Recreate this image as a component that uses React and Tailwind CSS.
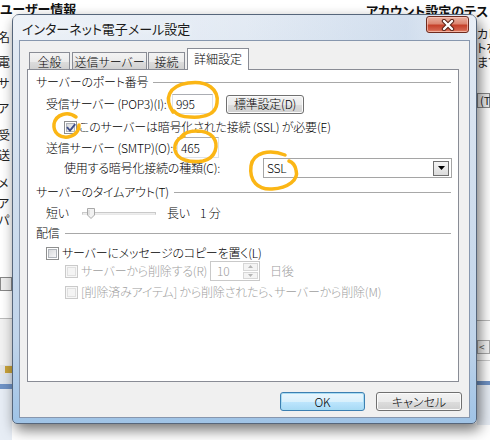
import React from "react";

const JP = "font-['Noto_Sans_CJK_JP','Noto_Sans',sans-serif] [font-feature-settings:'palt']";

function Checkbox({ checked, disabled }) {
  return (
    <span
      className={`relative flex w-[13px] h-[13px] shrink-0 p-[1px] border ${
        disabled ? "border-[#cacaca] bg-[#f7f7f7]" : "border-[#8e8f8f] bg-white"
      }`}
    >
      <span
        className={`flex-1 border ${
          disabled
            ? "border-[#e0e0e0] bg-[#f4f4f4]"
            : "border-[#b0b4ba] bg-[linear-gradient(135deg,#d9dadc,#f7f7f8)]"
        }`}
      />
      {checked && (
        <svg className="absolute left-[1px] top-[1px]" width="10" height="10" viewBox="0 0 10 10">
          <path d="M1.6 4.8 L4 7.6 L8.6 1.8" stroke="#3f4f8a" strokeWidth="1.9" fill="none" strokeLinecap="square" />
        </svg>
      )}
    </span>
  );
}

function Btn({ children, def, className = "" }) {
  return (
    <div
      className={`flex items-center justify-center rounded-[3px] border ${
        def
          ? "border-[#3c7fb1] shadow-[inset_0_0_0_1px_#a8dcf3] bg-[linear-gradient(to_bottom,#eaf6fd_0%,#d9f0fc_50%,#bee6fd_51%,#a7d9f5_100%)]"
          : "border-[#707070] shadow-[inset_0_0_0_1px_#fbfbfb] bg-[linear-gradient(to_bottom,#f2f2f2_0%,#ebebeb_50%,#dddddd_51%,#cfcfcf_100%)]"
      } text-[12px] leading-none text-black ${className}`}
    >
      {children}
    </div>
  );
}

function Input({ value, className = "" }) {
  return (
    <div
      className={`flex items-center border border-[#dde2e8] border-t-[#abadb3] bg-white pl-[3px] text-[12px] leading-none ${className}`}
    >
      {value}
    </div>
  );
}

function GroupHeader({ children, className = "" }) {
  return (
    <div className={`flex items-center h-[16px] pl-[8px] pr-[7px] ${className}`}>
      <span className="text-[12px] leading-none whitespace-nowrap">{children}</span>
      <span className="flex-1 ml-[5px] h-px bg-[#a8a8a8]" />
    </div>
  );
}

function Background() {
  const left = [
    ["名", 16],
    ["電", 11],
    ["サ", 7],
    ["ア", 11],
    ["受", 13],
    ["送", 6],
    ["メ", 14],
    ["ア", 6],
    ["パ", 3],
  ];
  return (
    <div className="absolute inset-0 bg-white">
      <div className="absolute left-0 top-0 w-[12px] h-full flex flex-col overflow-hidden">
        <div className="h-[14px] shrink-0" />
        {left.map(([c, m], i) => (
          <div key={i} className="h-[14px] shrink-0 text-[12px] leading-[14px] text-[#222] -ml-[2px]" style={{ marginTop: m }}>
            {c}
          </div>
        ))}
        <div className="mt-[50px] shrink-0 w-[12px] h-[14px] border border-[#888] bg-[#eee]" />
        <div className="mt-[27px] shrink-0 h-px bg-[#bbb]" />
        <div className="h-[46px] shrink-0 bg-[#f2f2f2]" />
        <div className="h-[9px] shrink-0 bg-[#e6e6e6] flex items-center pl-[5px]">
          <span className="w-[7px] h-[7px] bg-[#c9a33b]" />
        </div>
        <div className="h-[10px] shrink-0 bg-[#dfe6ef]" />
        <div className="h-[5px] shrink-0 bg-[#6f93c6]" />
        <div className="flex-1 bg-[#e7edf5]" />
      </div>
      <div className="absolute left-0 top-[1px] text-[13px] font-bold text-[#111] leading-[15px]">ユーザー情報</div>
      <div className="absolute left-[366px] top-[3px] text-[13px] font-bold text-[#111] leading-[15px]">アカウント設定のテスト</div>
      <div className="absolute left-[477px] top-[27px] w-[13px] h-full flex flex-col text-[12px] leading-[14px] text-[#222] overflow-hidden">
        <div className="h-[14px] whitespace-nowrap">カし</div>
        <div className="h-[14px] whitespace-nowrap">トを</div>
        <div className="h-[14px] whitespace-nowrap">ます</div>
        <div className="mt-[24px] h-[15px] border border-[#888] bg-[#eee] pl-[2px] text-[11px] leading-[13px] whitespace-nowrap">(T</div>
        <div className="mt-[212px] h-px bg-[#bbb]" />
        <div className="mt-[19px] h-[14px] border border-[#aaa] bg-[#f5f5f5] text-[10px] leading-[12px] pl-[1px] text-[#555]">&lt;</div>
        <div className="mt-[6px] h-px bg-[#ccc]" />
        <div className="mt-[20px] h-[4px] bg-[#6f93c6]" />
        <div className="h-[40px] bg-[#e7edf5]" />
      </div>
    </div>
  );
}

function CloseButton() {
  return (
    <div className="mt-[1px] mr-px w-[43px] h-[17px] rounded-[3px] border border-[#6e2b1f] bg-[linear-gradient(to_bottom,#eab2a2_0%,#dc8671_45%,#c5412a_55%,#d2604a_85%,#e48c6e_100%)] shadow-[inset_0_0_0_1px_rgba(255,210,200,0.6)] flex items-center justify-center">
      <svg width="14" height="12" viewBox="0 0 14 12">
        <path d="M3 2 L11 10 M11 2 L3 10" stroke="#5a2318" strokeWidth="4.4" strokeLinecap="round" />
        <path d="M3 2 L11 10 M11 2 L3 10" stroke="#ffffff" strokeWidth="2.4" strokeLinecap="round" />
      </svg>
    </div>
  );
}

function Tab({ children, w, selected }) {
  return (
    <div
      className={`flex items-center justify-center text-[12px] leading-none border border-[#898c95] ${
        selected
          ? "relative z-10 h-[22px] bg-white border-b-0 pb-[2px]"
          : "h-[18px] border-b-0 bg-[linear-gradient(to_bottom,#f3f3f3,#ebebeb_50%,#dddddd_51%,#cfcfcf)]"
      }`}
      style={{ width: w }}
    >
      {children}
    </div>
  );
}

function Spinner() {
  return (
    <div className="flex h-[20px] w-[50px] border border-[#c9c9c9] bg-white">
      <div className="flex-1 flex items-center pl-[6px] text-[12px] leading-none text-[#9c9c9c]">10</div>
      <div className="w-[15px] my-[1px] mr-[1px] flex flex-col gap-px">
        <div className="flex-1 border border-[#d7d7d7] bg-[#f4f4f4] flex items-center justify-center">
          <svg width="5" height="3" viewBox="0 0 5 3"><path d="M0 3 L2.5 0 L5 3Z" fill="#b5b5b5" /></svg>
        </div>
        <div className="flex-1 border border-[#d7d7d7] bg-[#f4f4f4] flex items-center justify-center">
          <svg width="5" height="3" viewBox="0 0 5 3"><path d="M0 0 L2.5 3 L5 0Z" fill="#b5b5b5" /></svg>
        </div>
      </div>
    </div>
  );
}

function Slider() {
  return (
    <div className="relative w-[74px] h-[14px] flex items-center">
      <div className="w-full h-[3px] border border-[#c9c9c9] border-b-[#e8e8e8] bg-[#eeeeee]" />
      <svg className="absolute left-[5px] top-[2px]" width="8" height="11" viewBox="0 0 8 11">
        <path d="M0.5 0.5 H7.5 V7 L4 10.5 L0.5 7 Z" fill="#f2f2f2" stroke="#a8a8a8" />
        <path d="M2 2 V7" stroke="#d0d0d0" />
      </svg>
    </div>
  );
}

function Panel() {
  return (
    <div className="-mt-px ml-[7px] w-[432px] h-[313px] border border-[#898c95] bg-white flex flex-col tracking-[-0.2px] font-light">
      <GroupHeader className="mt-[4px]">サーバーのポート番号</GroupHeader>

      <div className="mt-[4px] h-[20px] flex items-center pl-[18px]">
        <span className="w-[126px] text-[12px] leading-none whitespace-nowrap">受信サーバー (POP3)(I):</span>
        <Input value="995" className="w-[41px] h-[20px]" />
        <Btn className="ml-[13px] w-[78px] h-[19px]">標準設定(D)</Btn>
      </div>

      <div className="mt-[6px] h-[14px] flex items-center pl-[36px]">
        <Checkbox checked />
        <span className="ml-[2px] text-[12px] leading-none whitespace-nowrap">このサーバーは暗号化された接続 (SSL) が必要(E)</span>
      </div>

      <div className="mt-[3px] h-[21px] flex items-center pl-[18px]">
        <span className="w-[131px] text-[12px] leading-none whitespace-nowrap">送信サーバー (SMTP)(O):</span>
        <Input value="465" className="w-[42px] h-[21px]" />
      </div>

      <div className="h-[20px] flex items-center pl-[36px]">
        <span className="w-[199px] text-[12px] leading-none whitespace-nowrap">使用する暗号化接続の種類(C):</span>
        <div className="w-[189px] h-[20px] border border-[#a5a5a5] bg-white flex items-center pl-[3px] pr-[2px]">
          <span className="flex-1 text-[12px] leading-none">SSL</span>
          <div className="w-[16px] h-[15px] border border-[#6f6f6f] bg-[linear-gradient(to_bottom,#f4f4f4,#dcdcdc)] flex items-center justify-center">
            <svg width="7" height="4" viewBox="0 0 7 4"><path d="M0 0 H7 L3.5 4Z" fill="#000" /></svg>
          </div>
        </div>
      </div>

      <GroupHeader className="mt-[6px]">サーバーのタイムアウト(T)</GroupHeader>

      <div className="mt-[5px] h-[16px] flex items-center pl-[18px] text-[12px] leading-none">
        <span className="w-[36px]">短い</span>
        <Slider />
        <span className="ml-[11px] w-[33px]">長い</span>
        <span>1 分</span>
      </div>

      <GroupHeader className="mt-[4px]">配信</GroupHeader>

      <div className="mt-[5px] h-[14px] flex items-center pl-[18px]">
        <Checkbox />
        <span className="ml-[3px] text-[12px] leading-none whitespace-nowrap">サーバーにメッセージのコピーを置く(L)</span>
      </div>

      <div className="mt-[1px] h-[20px] flex items-center pl-[37px] text-[#a0a0a0]">
        <Checkbox disabled />
        <span className="ml-[3px] w-[129px] text-[12px] leading-none whitespace-nowrap">サーバーから削除する(R)</span>
        <Spinner />
        <span className="ml-[10px] text-[12px] leading-none">日後</span>
      </div>

      <div className="mt-[4px] h-[14px] flex items-center pl-[37px] text-[#a0a0a0]">
        <Checkbox disabled />
        <span className="ml-[3px] text-[12px] leading-none whitespace-nowrap">[削除済みアイテム] から削除されたら、サーバーから削除(M)</span>
      </div>
    </div>
  );
}

function Dialog() {
  return (
    <div className="absolute left-[12px] top-[14px] w-[465px] h-[410px] flex flex-col rounded-t-[7px] rounded-b-[5px] border border-[#56667b] bg-[linear-gradient(to_bottom,#e4ebf4_0%,#d2dfee_40%,#c0d4ea_80%,#9fc3e6_100%)] shadow-[3px_6px_14px_rgba(0,0,0,0.55)] px-[6px] pb-[5px]">
      <div className="h-[25px] flex items-start justify-between bg-[linear-gradient(to_right,rgba(255,255,255,0.35),rgba(255,255,255,0)_50%,rgba(170,195,225,0.3)_85%,rgba(255,255,255,0.2))] -mx-[6px] px-[6px]">
        <div className="pl-[3px] pt-[5px] text-[13px] leading-[17px] text-[#1b1b1b] [text-shadow:0_0_6px_#ffffff] whitespace-nowrap">
          インターネット電子メール設定
        </div>
        <CloseButton />
      </div>
      <div className="flex-1 border border-[#8797ae] bg-[#f0f0f0] flex flex-col">
        <div className="mt-[8px] pl-[9px] flex items-end h-[21px] font-light">
          <Tab w={41}>全般</Tab>
          <div className="w-[2px]" />
          <Tab w={75}>送信サーバー</Tab>
          <div className="w-[1px]" />
          <Tab w={37}>接続</Tab>
          <div className="w-[2px]" />
          <Tab w={62} selected>詳細設定</Tab>
        </div>
        <Panel />
        <div className="mt-[10px] flex justify-end pr-[7px] gap-[11px] font-light">
          <Btn def className="w-[85px] h-[19px]">OK</Btn>
          <Btn className="w-[86px] h-[19px]">キャンセル</Btn>
        </div>
      </div>
    </div>
  );
}

export default function App() {
  return (
    <div className={`relative w-[490px] h-[440px] overflow-hidden bg-white text-black ${JP}`}>
      <Background />
      <Dialog />
      <svg className="absolute inset-0 pointer-events-none" width="490" height="440" viewBox="0 0 490 440">
        <g fill="none" stroke="#fbb615" strokeWidth="3.5" strokeLinecap="round" strokeLinejoin="round">
          <path d="M173 112 C164 99 168 86 188 83 C208 80 219 90 217 103 C216 114 205 118 190 117 C182 117 177 115 174 111" />
          <path d="M76 117 C68 111 56 114 54 124 C53 133 60 138 68 137 C75 136 79 131 79 125" />
          <path d="M181 137 C187 129 206 129 213 137 C219 145 216 158 203 161 C190 163 177 160 175 150 C174 143 177 139 184 136" />
          <path d="M285 155 C270 149 253 152 251 166 C249 181 258 190 272 189 C288 188 299 180 296 170 C295 165 292 162 289 161" />
        </g>
      </svg>
    </div>
  );
}
